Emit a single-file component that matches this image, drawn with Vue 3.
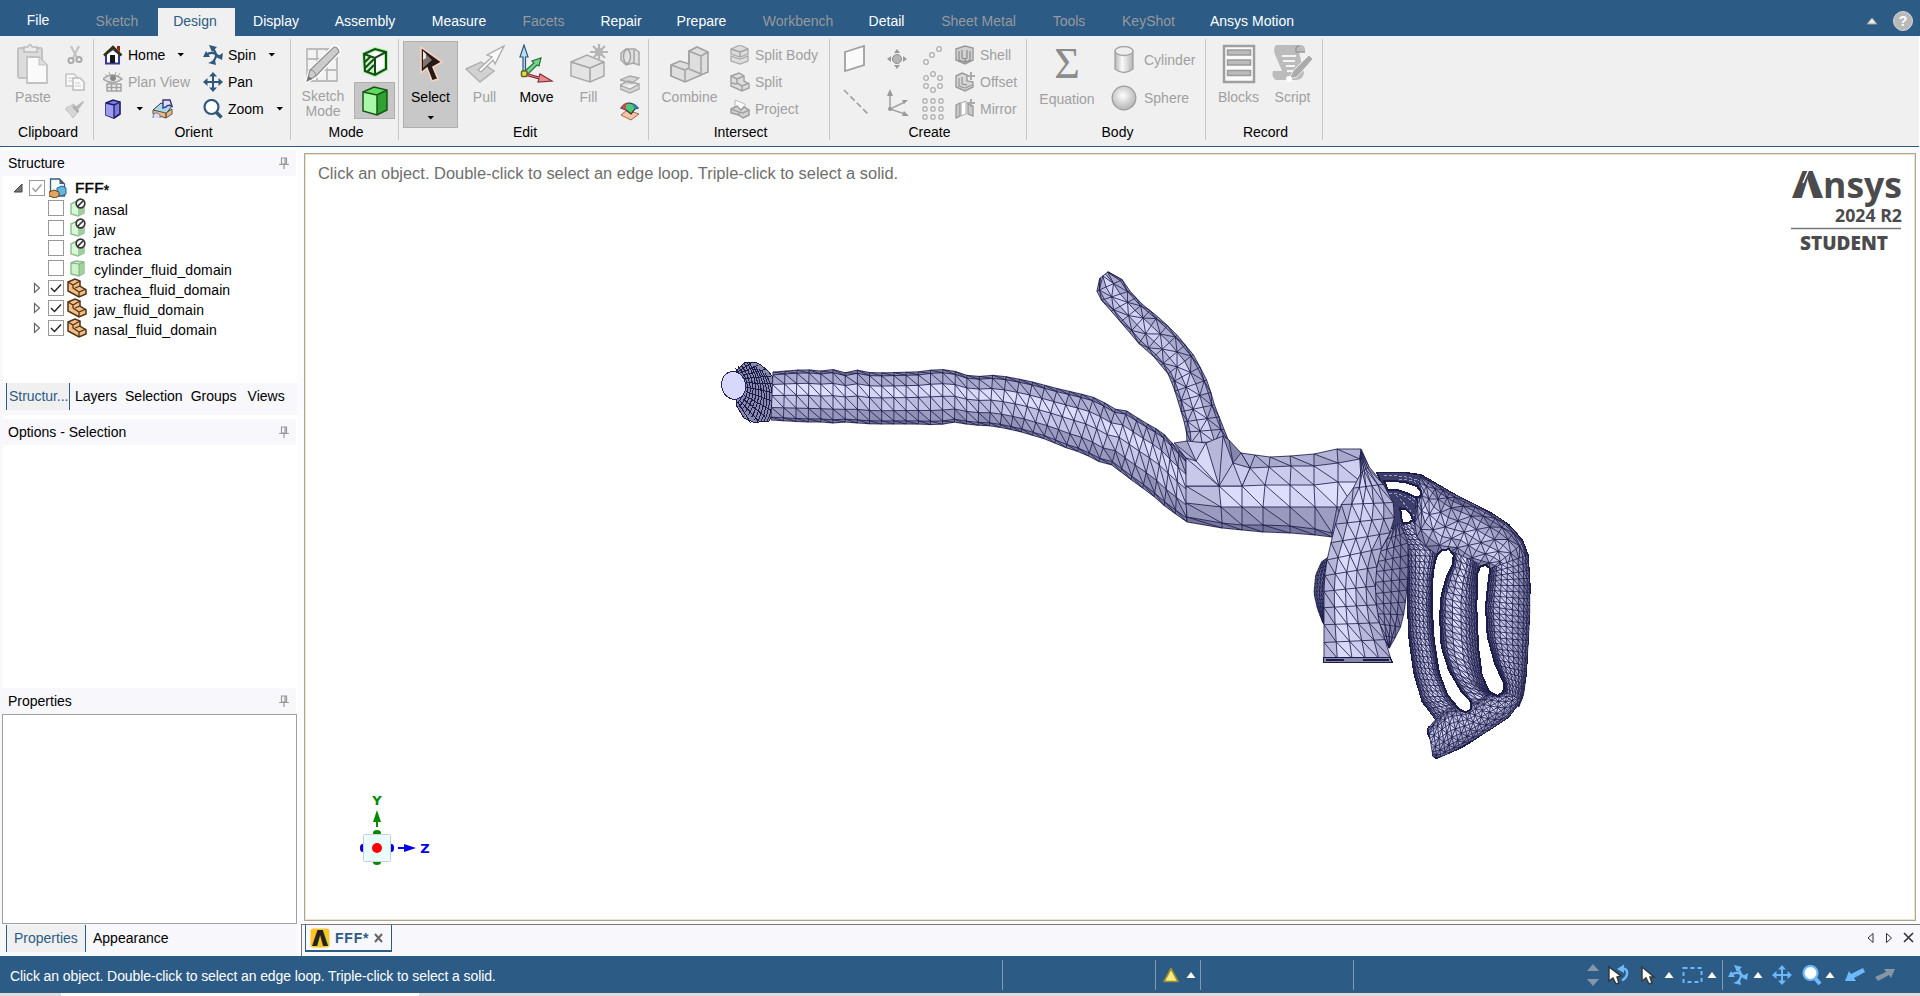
<script setup>
import { h } from 'vue'

/* ---------- icon set ---------- */
const G = 'fill="none" stroke="#a3a3a3" stroke-width="1.5" stroke-linejoin="round"'
const spin = (c) => `<g fill="none" stroke="${c}" stroke-width="2.2"><path d="M9 3q8 7 0 14.500M3 10q7-5 13 2"/></g><path fill="${c}" d="M6 0l8 2-5 5zM5 18l7-3 1 5zM0 12l3-6 4 6zM20 8l-1 7-6-3z"/>`
const pan = (c) => `<path fill="none" stroke="${c}" stroke-width="2" d="M10 3v14M3 10h14"/><path fill="${c}" d="M10 0l4 4.500H6zM10 20l4-4.500H6zM0 10l4.500-4v8zM20 10l-4.500-4v8z"/>`
const ring = (x, y) => `<circle cx="${x}" cy="${y}" r="2.300"/>`
const icons = {
  paste: [32, 41, `<rect x="1" y="5" width="24" height="30" rx="2" fill="#dcdcdc" stroke="#c2c2c2" stroke-width="2"/><path d="M7 9V4h4q2-5 4 0h5v5z" fill="#eee" stroke="#bbb" stroke-width="1.500"/><path d="M10 14h12l8 8v18H10z" fill="#fafafa" stroke="#c2c2c2" stroke-width="1.800"/><path d="M22 14v8h8z" fill="#ddd" stroke="#c2c2c2"/>`],
  cut: [20, 20, `<path d="M6 1l6 12M14 1L8 13" stroke="#c3c3c3" stroke-width="2.200" fill="none"/><g fill="#eee" stroke="#aaa" stroke-width="2"><circle cx="6" cy="15.500" r="2.600"/><circle cx="14" cy="14.500" r="2.600"/></g>`],
  copy: [20, 18, `<path d="M1 1h8l3 3v9H1z" fill="#fafafa" stroke="#c5c5c5" stroke-width="1.500"/><path d="M8 5h7l4 4v8H8z" fill="#fafafa" stroke="#bcbcbc" stroke-width="1.500"/><path d="M3 5h5M3 8h4M10 10h5M10 13h6" stroke="#ccc"/>`],
  brush: [20, 18, `<path d="M1 8l8-4 5 7-6 7q-3-5-7-8z" fill="#d6d6d6" stroke="#c3c3c3"/><path d="M10 7l8-6 1 1-6 8z" fill="#b9b9b9"/><path d="M8 6l5 6" stroke="#aaa" stroke-width="2"/>`],
  home: [20, 20, `<path d="M3 9v9.500h13V9L10 4z" fill="#fff" stroke="#38389a" stroke-width="2"/><path d="M14 1h3v6l-3-3z" fill="#991d1d"/><path d="M1 10.500L10 2l8.500 8.500" fill="none" stroke="#33330a" stroke-width="2.500"/><path d="M7 10h5v8H7z" fill="#181818"/>`],
  plan: [20, 20, `<path d="M0 7q9-8 19 0-9 7-19 0z" fill="#e5e5e5" stroke="#a5a5a5" stroke-width="1.500"/><circle cx="10" cy="6" r="3" fill="#888"/><path d="M2 2l2 2M6 0l1 3M13 0l-1 3M17 1l-2 3" stroke="#aaa"/><path d="M4 12h14v7H4zM4 15.500h14M8.500 12v7M13.500 12v7" ${G}/>`],
  cubeBlue: [18, 20, `<path d="M2 4l7-3 7 2v12l-6 4-8-3z" fill="#7b7be0" stroke="#1d1d62" stroke-width="1.600"/><path d="M2 4l8 2v13l-8-3z" fill="#9c9cf4"/><path d="M2 4l8 2 6-3M10 6v13" fill="none" stroke="#1d1d62" stroke-width="1.300"/>`],
  sheet: [22, 20, `<path d="M1 11l8-7 11 3-6 8z" fill="#a9d8ec" stroke="#333"/><path d="M1 11l13 3v5L1 15zM14 14l6-4v5l-6 4z" fill="#f0b880" stroke="#555"/><path d="M11 9V1h7l2 6q-4-2-6 1z" fill="#ddddfa" stroke="#37377f" stroke-width="1.400"/><path d="M1 19q0-6 4-5t3 5" stroke="#67a" fill="#dde"/>`],
  spin: [20, 20, spin('#2f587c')], pan: [20, 20, pan('#2f587c')],
  spinL: [20, 20, spin('#6db8fb')], panL: [20, 20, pan('#6db8fb')],
  zoom: [20, 20, `<circle cx="8.500" cy="8" r="7" fill="#fff" stroke="#2f587c" stroke-width="2.200"/><path d="M13 13l5.500 5.500" stroke="#2f587c" stroke-width="3.500"/>`],
  zoomL: [20, 20, `<circle cx="8.500" cy="8" r="7" fill="#fff" stroke="#6db8fb" stroke-width="2.200"/><path d="M13 13l5 6" stroke="#6db8fb" stroke-width="4"/>`],
  sketch: [36, 38, `<path d="M2 4h30v32H2zM2 14h30M2 25h30M12 4v32M22 4v32" fill="#f3f3f3" stroke="#bcbcbc" stroke-width="1.800"/><path d="M1 37l4-12L29 1q5 0 6 6L12 31z" fill="#c9c9c9" stroke="#fff" stroke-width="3"/><path d="M2 36l3-11L29 2q4 0 5 5L11 31z" fill="#ccc" stroke="#8f8f8f" stroke-width="1.200"/><path d="M5 25q5 0 6 6" fill="none" stroke="#888"/><path d="M2 36l1.500-5 4 3z" fill="#777"/>`],
  cubeHatch: [26, 30, `<path d="M2 7l11-5 11 3v17l-11 6-10-4z" fill="#fff" stroke="#a5efa5" stroke-width="4"/><path d="M3 8l9 3v15l-9-3z" fill="#c5f3c5"/><path d="M3 15l6-6M3 21l9-9M5 25l7-7" stroke="#174c17" stroke-width="2"/><path d="M2 7l11-5 11 3v17l-11 6-10-4zM2 7l11 4 11-6M13 11v17" fill="none" stroke="#174c17" stroke-width="2"/>`],
  cubeGreen: [26, 30, `<path d="M1 6l11-5 13 3v20l-10 5-14-4z" fill="#2fa12f"/><path d="M1 6l14 3v20L1 25z" fill="#a9f8a9"/><path d="M1 6l11-5 13 3-10 5z" fill="#5cdb5c"/><path d="M1 6l11-5 13 3v20l-10 5-14-4zM1 6l14 3 10-5M15 9v20" fill="none" stroke="#175517" stroke-width="1.500"/>`],
  arrow: [24, 38, `<path d="M2 2v26l6-5 5 13 6-2-5-12 9-5z" fill="#271a16" stroke="#f7d3bd" stroke-width="1.600"/><path d="M4 6v17l9-8z" fill="#7e7472"/><path d="M4 6v9l3-2V9z" fill="#f0e8e5"/>`],
  pull: [40, 38, `<path d="M1 24l15-7 13 9-14 11z" fill="#d2d2d2" stroke="#b1b1b1" stroke-width="1.500"/><path d="M13 25L27 12l-5-2L39 1l-9 18-2-4-12 12z" fill="#fafafa" stroke="#aaa" stroke-width="1.300"/>`],
  move: [36, 40, `<path d="M4 29V13H1L5 1l4 12H6.500v16z" fill="#b9dff2" stroke="#31587c" stroke-width="1.200"/><path d="M6 27l9-8-2-2 9-3-2 8-2-1-9 9z" fill="#75d88c" stroke="#237035" stroke-width="1.200"/><path d="M6 29l14 4 1-3 12 7-14 1 1-3-14-4z" fill="#ed8b8b" stroke="#862f3c" stroke-width="1.200"/><rect x="2.500" y="27" width="5.500" height="5.500" rx="1" fill="#e5dc4c" stroke="#67621f" stroke-width="1.500"/>`],
  fill: [38, 40, `<path d="M1 18l16-7 17 7v14l-14 6-19-6z" fill="#e3e3e3" stroke="#aaa" stroke-width="1.500"/><path d="M1 18l19 6 14-6M20 24v14" ${G}/><path d="M29 0v17M20 8h18M23 2l12 12M35 2L23 14" stroke="#b5b5b5" stroke-width="2.200"/><circle cx="29" cy="8" r="4" fill="#b5b5b5"/>`],
  s1: [20, 20, `<path d="M6 2h9l4 3v13l-6-2-7 2-5-5V6z" fill="#e1e1e1" stroke="#a6a6a6" stroke-width="1.500"/><ellipse cx="7" cy="9.500" rx="3.500" ry="7" ${G}/><path d="M14 3v13" ${G}/>`],
  s2: [20, 20, `<path d="M0 6l10-4 9 2-7 5zM0 11l8-4 11 3-9 5zM0 11v4l10 4 9-4v-5" fill="#d5d5d5" stroke="#a8a8a8" stroke-width="1.300"/>`],
  s3: [20, 20, `<path d="M1 14l6-5 12 4-8 6z" fill="#f4c5a4" stroke="#a66747"/><path d="M1 7q7-10 17 0l-3 1-4 5-5-4z" fill="#4fc77b" stroke="#292929" stroke-width="1.200"/><path d="M1 7q3-5 7-5-3 2-2 7z" fill="#d4444e"/><path d="M12 2q5 1 6 5l-3 1z" fill="#3377bd"/>`],
  combine: [40, 38, `<path d="M1 20l9-4 9 3V6l8-4 11 5v20l-23 10L1 31z" fill="#dedede" stroke="#a0a0a0" stroke-width="1.600"/><path d="M1 20l14 5 4-2V6l12 5 7-4M31 11v18l-12-5M15 25v12M1 20v11" ${G}/>`],
  splitBody: [20, 20, `<path d="M1 4l9-4 8 4v5l-8 3-9-3zM1 11l9 3 8-3v5l-8 3-9-3z" fill="#dcdcdc" stroke="#aaa" stroke-width="1.300"/><path d="M1 4l9 3 8-3M10 7v5" ${G}/>`],
  split: [20, 20, `<path d="M1 4l8-3 5 3v5l5 3v4l-7 3-11-5z" fill="#ddd" stroke="#a0a0a0" stroke-width="1.400"/><path d="M1 4l6 3 7-3M7 7v4l5 3 7-3M12 14v5M1 11l6 1" ${G}/>`],
  project: [20, 20, `<path d="M5 8V1l10 4v7" fill="#fafafa" stroke="#bbb"/><path d="M1 10l6-3 4 4 3-3 5 3v5l-6 3-4-3-8-2z" fill="#d3d3d3" stroke="#999" stroke-width="1.400"/><path d="M1 10l8 3 4 1 6-3M9 13v4" ${G}/>`],
  plane: [24, 28, `<path d="M2 7l19-6v19L2 26z" fill="#fafafa" stroke="#a0a0a0" stroke-width="1.800"/>`],
  origin: [22, 22, `<circle cx="11" cy="11" r="4.500" fill="#b5b5b5" stroke="#8e8e8e"/><path fill="#999" d="M11 1l3 4H8zM11 21l3-4H8zM1 11l4-3v6zM21 11l-4-3v6z"/>`],
  line: [26, 26, `<path d="M1 1l24 24" stroke="#a0a0a0" stroke-width="1.700" stroke-dasharray="6 3"/>`],
  axes: [24, 28, `<path d="M4 20V4M4 20l15-7M4 20l15 5" stroke="#a5a5a5" stroke-width="1.600"/><circle cx="4" cy="20" r="2" fill="#999"/><path fill="#999" d="M4 0l3 7H1zM22 11l-6 0 2 4zM23 27l-7 0 2-5z"/>`],
  p1: [22, 22, `<g fill="#f5f5f5" stroke="#adadad" stroke-width="1.300">${ring(4, 18)}${ring(10, 11)}${ring(17, 5)}</g>`],
  p2: [22, 22, `<g fill="#f5f5f5" stroke="#adadad" stroke-width="1.300">${ring(11, 3)}${ring(11, 19)}${ring(4, 7)}${ring(18, 7)}${ring(4, 15)}${ring(18, 15)}</g>`],
  p3: [22, 22, `<g fill="#f5f5f5" stroke="#adadad" stroke-width="1.300">${[3, 11, 19].map((y) => [3, 11, 19].map((x) => `<rect x="${x - 2}" y="${y - 2}" width="4" height="4" rx="1"/>`).join('')).join('')}</g>`],
  shell: [20, 20, `<path d="M1 4l9-3 8 2v12l-8 4-9-4z" fill="#d3d3d3" stroke="#989898" stroke-width="1.400"/><path d="M4 6v9l6 2 5-2V6M7 5v8l3 1 2-1V5M10 14v4" fill="none" stroke="#8f8f8f" stroke-width="1.300"/>`],
  offset: [20, 20, `<path d="M1 4l6-3 5 2v6l6 1v5l-8 4-9-4z" fill="#d8d8d8" stroke="#999" stroke-width="1.400"/><path d="M4 6v8l6 2 7-3M7 5v7l5 1" fill="none" stroke="#999" stroke-width="1.300"/><path d="M16 0v8M12 4h8" stroke="#aaa" stroke-width="2"/>`],
  mirror: [20, 20, `<path d="M1 6l4-2v13l-4 2zM13 5l5 2v10l-5-2z" fill="#c8c8c8" stroke="#999" stroke-width="1.300"/><path d="M6 4l5-2v13l-5 2z" fill="#fff" stroke="#aaa"/><path d="M16 0v8M12 4h8" stroke="#aaa" stroke-width="2"/>`],
  cylinder: [20, 28, `<path d="M1 5v18q9 7 18 0V5z" fill="url(#cyl)" stroke="#a3a3a3" stroke-width="1.300"/><ellipse cx="10" cy="5" rx="9" ry="4.500" fill="#eee" stroke="#a3a3a3" stroke-width="1.300"/>`],
  sphere: [26, 26, `<circle cx="13" cy="13" r="11.800" fill="url(#sph)" stroke="#9d9d9d" stroke-width="1.300"/>`],
  blocks: [34, 40, `<rect x="2" y="2" width="30" height="36" fill="#fafafa" stroke="#9f9f9f" stroke-width="2.500"/><path d="M5.500 6h23v5h-23zM5.500 16h23v5h-23zM5.500 26.500h23v5h-23z" fill="#bbb" stroke="#9a9a9a" stroke-width="1.500"/>`],
  script: [42, 42, `<path d="M4 2h24q6 0 5 7h-6l5 21q-1 7-8 7H4q-5-3-3-9h9L4 14Q0 6 4 2z" fill="#bcbcbc"/><path d="M27 3q-4 0-3 6h9" fill="none" stroke="#999" stroke-width="1.500"/><path d="M10 13h14M11 18h12M14 23h9M15 28h6" stroke="#f4f4f4" stroke-width="2.200"/><path d="M17 36l4-8L37 12l4 4-16 18z" fill="#ababab" stroke="#eee" stroke-width="1"/><circle cx="17" cy="36" r="3" fill="#fff"/>`],
  pin: [10, 12, `<path d="M2.500 1h5v6h-5zM0 7.500h10M5 8v4M6 1v6" fill="none" stroke="#999" stroke-width="1.200"/>`],
  doc: [18, 20, `<path d="M1.500 1h9l5 5v12h-14z" fill="#f4f8fb" stroke="#3e5b78" stroke-width="1.300"/><path d="M10.500 1v5h5z" fill="#3e5b78"/><path d="M8 10l5-2 4 2v6l-5 2-4-2z" fill="#61b7e0" stroke="#28648c"/><path d="M0 14l5-2 5 2v4l-4 2-6-2z" fill="#e4a35f" stroke="#68411e"/>`],
  cubeOff: [18, 20, `<path d="M2 6l6-3 7 2v10l-6 3-7-2z" fill="#daf7da" stroke="#8fbd8f" stroke-width="1.400"/><path d="M9 8l6-3v10l-6 3z" fill="#9fce9f"/><circle cx="11.500" cy="5.500" r="4.300" fill="#fff" stroke="#333" stroke-width="1.700"/><path d="M8.500 8.500l6-6" stroke="#333" stroke-width="1.700"/>`],
  cubePale: [18, 20, `<path d="M2 5l5-2 8 1v11l-5 3-8-2z" fill="#ccf3cc" stroke="#8fb98f" stroke-width="1.400"/><path d="M10 6l5-2v11l-5 3z" fill="#9ed39e"/><path d="M2 5l8 1 5-2M10 6v12" fill="none" stroke="#7eae7e"/>`],
  part: [20, 20, `<path d="M1 4l7-3 5 2v5l6 4v4l-7 3L1 13z" fill="#f3bd86" stroke="#4f3317" stroke-width="1.500"/><path d="M1 4l5 3 7-4M6 7v3l6 4 7-3M12 14v5M8 10l5-2" fill="none" stroke="#4f3317" stroke-width="1.300"/>`],
  updown: [14, 24, `<path d="M7 1l6 7H1zM7 23l6-7H1z" fill="#8496a8"/>`],
  curUndo: [22, 22, `<path d="M12 4.500q8-1 7 6-1 4-5 6" fill="none" stroke="#6db8fb" stroke-width="2.400"/><path d="M9 5l7-4.500v8.500z" fill="#6db8fb"/><path d="M1 3v14l4-3 3 6 3-1-2-6 4-1z" fill="#fff" stroke="#333" stroke-width="1.400"/>`],
  cur: [16, 20, `<path d="M2 2v14l4-3 3 6 3-1-2-6h4z" fill="#fff" stroke="#3a3a3a" stroke-width="1.500"/>`],
  box: [22, 18, `<rect x="1.500" y="2" width="18" height="14" fill="none" stroke="#6db8fb" stroke-width="2" stroke-dasharray="4 3"/>`],
  tri: [10, 8, `<path d="M5 1l4.500 6h-9z" fill="#fff"/>`],
  warn: [18, 18, `<path d="M9 2.500L16 15.500H2z" fill="#f8ec80" stroke="#9c8c2c" stroke-width="1.600" stroke-linejoin="round"/>`],
  back: [20, 16, `<path d="M0 14L4 4l2 3 12-6 2 4L9 11l2 3z" fill="#6db8fb"/>`],
  fwd: [20, 16, `<path d="M20 2l-4 9-2-3L3 14l-3-4 11-5-2-3z" fill="#8496a8"/>`],
  down: [8, 5, `<path d="M0.500 1h6.500L3.750 4.500z" fill="#000"/>`],
}
const Icon = ({ n }) => {
  const [w, hh, body] = icons[n]
  return h('svg', { width: w, height: hh, viewBox: `0 0 ${w} ${hh}`, innerHTML: body })
}
Icon.props = ['n']

const tabs = [
  ['File', 76, 'file'], ['Sketch', 82, 'off'], ['Design', 77, 'active'], ['Display', 82], ['Assembly', 96], ['Measure', 92],
  ['Facets', 77, 'off'], ['Repair', 78], ['Prepare', 83], ['Workbench', 110, 'off'], ['Detail', 67], ['Sheet Metal', 117, 'off'],
  ['Tools', 64, 'off'], ['KeyShot', 95, 'off'], ['Ansys Motion', 112],
]
const tree = [
  ['nasal', 'cubeOff', false], ['jaw', 'cubeOff', false], ['trachea', 'cubeOff', false], ['cylinder_fluid_domain', 'cubePale', false],
  ['trachea_fluid_domain', 'part', true], ['jaw_fluid_domain', 'part', true], ['nasal_fluid_domain', 'part', true],
]

/* ---------- surface mesh ---------- */
let seed = 7
const rnd = () => ((seed = (seed * 16807) % 2147483647) / 2147483647)
const mix = (a, b, t) => a + (b - a) * t
const lerp = (p, q, t) => [mix(p[0], q[0], t), mix(p[1], q[1], t)]
const colour = (l) => {
  const k = Math.max(0, Math.min(1, l))
  return `rgb(${Math.round(mix(100, 222, k))},${Math.round(mix(100, 222, k))},${Math.round(mix(140, 255, k))})`
}
const pt = (p) => `${p[0].toFixed(1)},${p[1].toFixed(1)}`
const T = (pts, l) => ({ v: pts, p: pts.map(pt).join(' '), f: colour(l) })
function patch(pairs, n, vs, { peak = 0.4, lo = 0.25, hi = 0.95, jit = 0.07, alt = false, pow = 1.5 } = {}) {
  const mids = pairs.map((p) => lerp(p[0], p[1], 0.5))
  const acc = [0]
  for (let i = 1; i < mids.length; i++) acc.push(acc[i - 1] + Math.hypot(mids[i][0] - mids[i - 1][0], mids[i][1] - mids[i - 1][1]))
  const at = (u) => {
    const d = u * acc[acc.length - 1]
    let i = 1
    while (i < acc.length - 1 && acc[i] < d) i++
    const t = (d - acc[i - 1]) / (acc[i] - acc[i - 1])
    return [lerp(pairs[i - 1][0], pairs[i][0], t), lerp(pairs[i - 1][1], pairs[i][1], t)]
  }
  const grid = []
  for (let i = 0; i <= n; i++) {
    const [a, b] = at(i / n)
    grid.push(vs.map((v) => lerp(a, b, v)))
  }
  const out = []
  for (let i = 0; i < n; i++)
    for (let j = 0; j < vs.length - 1; j++) {
      const v = (vs[j] + vs[j + 1]) / 2
      const d = v < peak ? (peak - v) / peak : (v - peak) / (1 - peak)
      const l = mix(hi, lo, Math.pow(d, pow))
      const [a, b, c, e] = [grid[i][j], grid[i + 1][j], grid[i + 1][j + 1], grid[i][j + 1]]
      const flip = alt && (i + j) % 2
      out.push(T(flip ? [a, b, e] : [a, b, c], l + (rnd() - 0.5) * jit * 2), T(flip ? [b, c, e] : [a, c, e], l + (rnd() - 0.5) * jit * 2))
    }
  return out
}
/* faces plus one wireframe path holding every shared edge once */
function surface(tris) {
  const seen = new Set()
  let d = ''
  for (const t of tris)
    for (let i = 0; i < 3; i++) {
      const [a, b] = [pt(t.v[i]), pt(t.v[(i + 1) % 3])].sort()
      if (a === b || seen.has(a + b)) continue
      seen.add(a + b)
      d += `M${a}L${b}`
    }
  return { tris, d }
}
const shift = (ox, oy) => (rows) => rows.map(([a, b, c, d]) => [[ox + a / 3, oy + b / 3], [ox + c / 3, oy + d / 3]])
const B = shift(1070, 250)
const N = shift(1290, 440)
const abs = (rows) => rows.map(([a, b, c, d]) => [[a, b], [c, d]])
const even = (n) => Array.from({ length: n + 1 }, (_, i) => i / n)

const trachea = patch(abs([
  [774, 372, 772, 420], [806, 369.500, 805, 422], [822, 371, 822, 422], [834, 369.500, 834, 423], [845, 373, 845, 422], [858, 370, 858, 423], [873, 373, 873, 424],
  [918, 372, 918, 424], [940, 369, 940, 425], [955, 371, 954, 422], [973, 377, 973, 425], [998, 375, 994, 426], [1030, 381, 1019, 431],
  [1060, 389, 1046, 439], [1086, 395, 1070, 449], [1100, 399, 1084, 453], [1115, 409, 1098, 461], [1128, 411, 1113, 465], [1145, 422, 1127, 476],
  [1163, 432, 1152, 494], [1175, 445, 1168, 508], [1187, 458, 1188, 522]]), 36, [0, 0.060, 0.26, 0.49, 0.74, 0.94, 1], { peak: 0.38, lo: 0.12, hi: 0.95 })
const branch = patch(B([
  [92, 85, 118, 65], [78, 112, 150, 75], [97, 150, 182, 122], [150, 210, 216, 160], [215, 287, 270, 203], [250, 315, 320, 250],
  [300, 375, 376, 318], [320, 430, 418, 400], [338, 490, 438, 470], [352, 540, 462, 530], [354, 578, 480, 575]]), 17, [0, 0.100, 0.36, 0.66, 0.92, 1], { peak: 0.42, lo: 0.25, hi: 0.9, alt: true })
const V = { a: [1175, 443], b: [1188, 441], c: [1207, 443], d: [1224, 436], e: [1197, 461], f: [1187, 458], g: [1220, 486], h: [1234, 463], i: [1242, 453], j: [1251, 468], k: [1243, 486], l: [1187, 486], q: [1230, 440] }
const joint = [
  T([V.a, V.b, V.e], 0.55), T([V.a, V.f, V.e], 0.7), T([V.b, V.c, V.e], 0.8), T([V.c, V.e, V.g], 0.95), T([V.e, V.f, V.g], 0.9), T([V.f, V.l, V.g], 0.82),
  T([V.c, V.d, V.g], 0.68), T([V.d, V.h, V.g], 0.7), T([V.d, V.h, V.q], 0.35), T([V.q, V.h, V.i], 0.28), T([V.h, V.i, V.j], 0.55), T([V.h, V.k, V.g], 0.78), T([V.h, V.j, V.k], 0.85),
]
const rows = [
  [[1242, 453], [1256, 455], [1271, 457], [1291, 456], [1315, 454], [1338, 449], [1362, 449]],
  [[1235, 463], [1251, 468], [1270, 467], [1292, 466], [1315, 466], [1339, 463], [1361, 459]],
  [[1220, 486], [1243, 486], [1266, 485], [1291, 485], [1315, 485], [1339, 482], [1362, 482]],
  [[1222, 507], [1243, 507], [1264, 507], [1291, 507], [1316, 507], [1338, 507], [1355, 507]],
  [[1223, 523], [1243, 525], [1264, 525], [1291, 526], [1316, 529], [1333, 533], [1350, 534]],
  [[1223, 528], [1243, 530], [1264, 532], [1291, 533], [1316, 535], [1333, 537], [1350, 538]],
]
const body = [T([V.l, V.g, [1222, 507]], 0.72), T([V.l, [1187, 503], [1222, 507]], 0.66), T([[1187, 503], [1222, 507], [1223, 523]], 0.45), T([[1187, 503], [1188, 517], [1223, 523]], 0.42), T([[1188, 517], [1223, 523], [1223, 528]], 0.15), T([[1188, 517], [1188, 522], [1223, 528]], 0.12)]
const shade = [0.6, 0.84, 0.96, 0.42, 0.15]
rows.slice(0, 5).forEach((r, j) => {
  for (let i = 0; i < 6; i++) {
    body.push(T([r[i], r[i + 1], rows[j + 1][i + 1]], shade[j] + rnd() * 0.06), T([r[i], rows[j + 1][i + 1], rows[j + 1][i]], shade[j] - rnd() * 0.05))
  }
})
const throatSurfaces = [
  patch(N([[315, 260, 335, 250], [272, 335, 357, 310], [258, 410, 357, 400], [260, 480, 352, 470], [268, 540, 340, 550], [285, 595, 315, 600], [300, 625, 302, 622]]), 11, even(4), { peak: 0.1, lo: 0.1, hi: 0.42, jit: 0.05 }),
  patch(N([[98, 365, 120, 350], [80, 405, 112, 400], [75, 460, 106, 460], [85, 505, 106, 510], [102, 550, 106, 550]]), 16, even(4), { lo: 0, hi: 0.3 }),
  patch(N([[213, 50, 217, 28], [215, 100, 240, 80], [215, 135, 270, 105], [175, 152, 293, 155], [150, 210, 320, 200], [130, 290, 312, 262], [112, 370, 272, 335], [105, 430, 258, 410], [105, 490, 260, 480], [105, 545, 268, 540], [105, 600, 285, 590], [105, 655, 305, 655]]), 12, [0, 0.200, 0.42, 0.62, 0.82, 1], { peak: 0.35, lo: 0.5, hi: 0.93 }),
].map(surface)
const tube = { peak: 0.5, lo: 0.08, hi: 1, jit: 0.12, pow: 1.3 }
const nasalSurfaces = [
  patch(N([[325, 262, 385, 240], [332, 290, 415, 290], [352, 330, 445, 335], [357, 400, 431, 410], [357, 480, 428, 500], [361, 580, 433, 590], [375, 690, 450, 700], [397, 775, 482, 772], [440, 840, 520, 815]]), 34, [0, 0.060, 0.16, 0.3, 0.45, 0.62, 0.78, 0.87, 0.94, 1], { ...tube, peak: 0.55 }),
  patch(N([[395, 105, 385, 165], [440, 130, 375, 235], [470, 148, 385, 300], [500, 165, 445, 345], [560, 195, 495, 345], [620, 228, 535, 375], [660, 255, 575, 385], [700, 300, 603, 385], [716, 350, 605, 405]]), 13, [0, 0.040, 0.11, 0.22, 0.38, 0.54, 0.7, 0.85, 1], { peak: 0.62, lo: 0.1, hi: 0.82, jit: 0.14, alt: true }),
  patch(N([[490, 335, 568, 370], [495, 365, 564, 395], [475, 410, 560, 430], [457, 470, 562, 500], [455, 560, 565, 600], [462, 630, 572, 680], [485, 700, 590, 745], [515, 750, 620, 770], [548, 800, 640, 785]]), 24, [0, 0.050, 0.12, 0.32, 0.56, 0.7, 0.79, 0.86, 0.93, 1], { ...tube, peak: 0.38 }),
  patch(N([[605, 385, 716, 345], [600, 430, 722, 430], [592, 500, 722, 520], [598, 590, 718, 600], [620, 670, 712, 690], [647, 735, 705, 760], [640, 780, 690, 800]]), 24, [0, 0.050, 0.1, 0.16, 0.3, 0.45, 0.6, 0.74, 0.86, 0.94, 1], { ...tube, peak: 0.36, hi: 0.85 }),
  patch(N([[418, 865, 432, 950], [440, 838, 450, 953], [475, 805, 500, 930], [530, 805, 560, 895], [550, 790, 600, 870], [600, 765, 660, 830], [645, 755, 697, 780]]), 20, [0, 0.080, 0.2, 0.36, 0.52, 0.68, 0.82, 0.93, 1], { peak: 0.35, lo: 0.2, hi: 0.88, jit: 0.14, alt: true }),
].map(surface)
const path = (pts) => 'M' + pts.map(([x, y]) => pt([1290 + x / 3, 440 + y / 3])).join('L') + 'Z'
const nasalShell = path([[262, 97], [345, 97], [397, 105], [500, 165], [600, 215], [660, 255], [700, 300], [717, 345], [723, 440], [719, 560], [712, 700], [700, 775], [660, 830], [600, 870], [520, 922], [442, 955], [432, 945], [433, 915], [416, 880], [418, 862], [442, 855], [440, 838], [400, 785], [375, 700], [361, 600], [355, 480], [355, 340], [325, 285], [305, 260], [290, 150]])
const holes = [
  [[286, 123], [345, 125], [383, 138], [397, 155], [393, 170], [380, 173], [355, 160], [325, 150], [296, 150]],
  [[334, 205], [350, 208], [366, 222], [371, 240], [358, 250], [342, 250], [337, 235]],
  [[430, 420], [434, 380], [444, 345], [460, 330], [480, 328], [494, 345], [492, 372], [472, 415], [458, 465], [453, 530], [458, 620], [480, 690], [518, 755], [546, 785], [546, 808], [530, 817], [510, 808], [475, 765], [450, 700], [434, 600], [428, 500]],
  [[565, 400], [573, 380], [590, 374], [604, 386], [598, 430], [591, 500], [596, 590], [618, 670], [645, 730], [643, 757], [625, 768], [600, 755], [578, 705], [567, 620], [562, 500]],
].map(path)
const ribs = Array.from({ length: 11 }, (_, i) => {
  const t = i / 10
  const x = mix(741, 768, t)
  const top = t < 0.4 ? mix(368, 362, t / 0.4) : mix(362, 373, (t - 0.4) / 0.6)
  return `M${x - 5 + t * 3} ${top} Q${x + 14 - t * 2} ${mix(388, 395, t)} ${x - 4 + t * 4} ${mix(404, 422, Math.min(1, t * 1.500))}`
})
const spokes = Array.from({ length: 11 }, (_, i) => {
  const a = mix(-1.500, 1.500, i / 10)
  return `M${(738 + 9 * Math.cos(a)).toFixed(1)} ${(387 + 15 * Math.sin(a)).toFixed(1)} L${(750 + 26 * Math.cos(a)).toFixed(1)} ${(393 + 30 * Math.sin(a)).toFixed(1)}`
})
const surfaces = [trachea, branch, body, joint].map(surface)
</script>

<template>
  <div class="app">
    <svg class="defs" width="0" height="0">
      <defs>
        <linearGradient id="cyl"><stop offset="0" stop-color="#b5b5b5" /><stop offset=".4" stop-color="#fafafa" /><stop offset="1" stop-color="#b5b5b5" /></linearGradient>
        <radialGradient id="sph" cx=".45" cy=".4" r=".6"><stop offset="0" stop-color="#fff" /><stop offset="1" stop-color="#b3b3b3" /></radialGradient>
      </defs>
    </svg>

    <nav class="tabs">
      <div v-for="t in tabs" :key="t[0]" class="tab" :class="t[2]" :style="{ width: t[1] + 'px' }">{{ t[0] }}</div>
      <div class="tabtools">
        <svg width="12" height="8"><path d="M6 1l5 6H1z" fill="#eee" stroke="#999" /></svg>
        <svg width="20" height="20"><circle cx="10" cy="10" r="9.500" fill="#b9b9b9" stroke="#d7d7d7" /><text x="10" y="15" text-anchor="middle" font-size="14" font-weight="700" fill="#fff">?</text></svg>
      </div>
    </nav>

    <div class="ribbon">
      <section class="group">
        <div class="gbody">
          <div class="big off w65"><div class="ic"><Icon n="paste" /></div>Paste</div>
          <div class="col smalls"><span><Icon n="cut" /></span><span><Icon n="copy" /></span><span><Icon n="brush" /></span></div>
        </div>
        <div class="label">Clipboard</div>
      </section>
      <section class="group g2">
        <div class="gbody">
          <div class="col c1">
            <div class="row"><Icon n="home" />Home<Icon n="down" class="dn" /></div>
            <div class="row off"><Icon n="plan" />Plan View</div>
            <div class="row cubes"><Icon n="cubeBlue" /><Icon n="down" /><Icon n="sheet" class="sh" /></div>
          </div>
          <div class="col">
            <div class="row"><Icon n="spin" />Spin<Icon n="down" class="dn" /></div>
            <div class="row"><Icon n="pan" />Pan</div>
            <div class="row"><Icon n="zoom" />Zoom<Icon n="down" class="dn" /></div>
          </div>
        </div>
        <div class="label">Orient</div>
      </section>
      <section class="group g3">
        <div class="gbody">
          <div class="big off w64 two"><div class="ic"><Icon n="sketch" /></div>Sketch<br>Mode</div>
          <div class="col modes"><span><Icon n="cubeHatch" /></span><span class="on"><Icon n="cubeGreen" /></span></div>
        </div>
        <div class="label">Mode</div>
      </section>
      <section class="group g4">
        <div class="gbody">
          <div class="big sel"><div class="ic"><Icon n="arrow" /></div>Select<Icon n="down" /></div>
          <div class="big off w54"><div class="ic"><Icon n="pull" /></div>Pull</div>
          <div class="big w51"><div class="ic"><Icon n="move" /></div>Move</div>
          <div class="big off w52"><div class="ic"><Icon n="fill" /></div>Fill</div>
          <div class="col rows"><div class="row"><Icon n="s1" /></div><div class="row"><Icon n="s2" /></div><div class="row"><Icon n="s3" /></div></div>
        </div>
        <div class="label">Edit</div>
      </section>
      <section class="group g5">
        <div class="gbody">
          <div class="big off w82"><div class="ic"><Icon n="combine" /></div>Combine</div>
          <div class="col off">
            <div class="row"><Icon n="splitBody" />Split Body</div>
            <div class="row"><Icon n="split" />Split</div>
            <div class="row"><Icon n="project" />Project</div>
          </div>
        </div>
        <div class="label">Intersect</div>
      </section>
      <section class="group g6">
        <div class="gbody">
          <div class="quad"><Icon n="plane" /><Icon n="origin" /><Icon n="line" /><Icon n="axes" /></div>
          <div class="col pats"><div class="row"><Icon n="p1" /></div><div class="row"><Icon n="p2" /></div><div class="row"><Icon n="p3" /></div></div>
          <div class="col off">
            <div class="row"><Icon n="shell" />Shell</div>
            <div class="row"><Icon n="offset" />Offset</div>
            <div class="row"><Icon n="mirror" />Mirror</div>
          </div>
        </div>
        <div class="label">Create</div>
      </section>
      <section class="group g7">
        <div class="gbody">
          <div class="big off w80 eq"><div class="ic sigma">Σ</div>Equation</div>
          <div class="col off solids">
            <div><span><Icon n="cylinder" /></span>Cylinder</div>
            <div><span><Icon n="sphere" /></span>Sphere</div>
          </div>
        </div>
        <div class="label">Body</div>
      </section>
      <section class="group g8">
        <div class="gbody">
          <div class="big off w60"><div class="ic"><Icon n="blocks" /></div>Blocks</div>
          <div class="big off w50"><div class="ic"><Icon n="script" /></div>Script</div>
        </div>
        <div class="label">Record</div>
      </section>
    </div>

    <main class="main">
      <aside class="side">
        <header class="head">Structure<Icon n="pin" /></header>
        <div class="tree">
          <div class="node root">
            <svg class="exp" width="12" height="12"><path d="M9 2v8H1z" fill="#777" stroke="#444" /></svg>
            <i class="chk"><svg width="14" height="14"><path d="M2.500 7l3 3.500 6-7" fill="none" stroke="#999" stroke-width="1.300" /></svg></i>
            <Icon n="doc" /><b>FFF<em>*</em></b>
          </div>
          <div v-for="n in tree" :key="n[0]" class="node">
            <svg class="exp" width="8" height="12"><path v-if="n[2]" d="M1.500 1.500l5 4.500-5 4.500z" fill="#fff" stroke="#666" stroke-width="1.200" /></svg>
            <i class="chk"><svg v-if="n[2]" width="14" height="14"><path d="M2 7l3.500 3.500 6.500-7" fill="none" stroke="#222" stroke-width="1.400" /></svg></i>
            <Icon :n="n[1]" class="ti" /><span>{{ n[0] }}</span>
          </div>
        </div>
        <div class="ptabs stabs"><span class="cur">Structur...</span><span>Layers</span><span>Selection</span><span>Groups</span><span>Views</span></div>
        <header class="head opt">Options - Selection<Icon n="pin" /></header>
        <div class="blank"></div>
        <header class="head">Properties<Icon n="pin" /></header>
        <div class="props"></div>
        <div class="ptabs btabs"><span class="cur">Properties</span><span>Appearance</span></div>
      </aside>

      <section class="work">
        <div class="canvas">
          <svg class="scene" width="1608" height="765" viewBox="307 155 1608 765">
            <g shape-rendering="crispEdges">
              <path d="M737 371L746 362H756L762 365L770 372L778 383V407L770 421L755 422.500L745 418L737 405Z" fill="#8a8aae" stroke="#1c1c48" />
              <path v-for="(d, i) in ribs" :key="'r' + i" :d="d" fill="none" stroke="#1c1c48" />
              <path v-for="(d, i) in spokes" :key="'s' + i" :d="d" fill="none" stroke="#1c1c48" />
              <g v-for="(s, k) in surfaces" :key="k" class="mesh"><polygon v-for="(t, i) in s.tris" :key="i" :points="t.p" :fill="t.f" /><path :d="s.d" /></g>
              <ellipse cx="734.500" cy="385.500" rx="12" ry="14" transform="rotate(-12 734 385)" fill="#d8d8fd" stroke="#24245a" />
              <path :d="nasalShell" fill="#3e3e6b" stroke="#1c1c48" stroke-width="1.500" />
              <g fill="none" stroke="#9a9aca" stroke-dasharray="3 2"><path d="M1385 476Q1404 474 1424 482" /><path d="M1400 479Q1414 479 1430 489" /><path d="M1390 493Q1410 494 1419 508" /><path d="M1397 495Q1408 506 1416 517" /><path d="M1405 492Q1416 498 1420 504" /></g>
              <g v-for="(s, k) in nasalSurfaces" :key="'n' + k" class="mesh"><polygon v-for="(t, i) in s.tris" :key="i" :points="t.p" :fill="t.f" /><path :d="s.d" /></g>
              <path v-for="(d, i) in holes" :key="'h' + i" :d="d" fill="#fff" stroke="#1c1c48" stroke-width="2" />
              <g v-for="(s, k) in throatSurfaces" :key="'t' + k" class="mesh"><polygon v-for="(t, i) in s.tris" :key="i" :points="t.p" :fill="t.f" /><path :d="s.d" /></g>
              <path d="M1324.500 657.500H1391L1393.500 662.500H1324.500Z" fill="#8888ad" stroke="#1c1c48" stroke-width="1.500" /><path d="M1327 660h18M1364 660h26" stroke="#1c1c48" stroke-width="2" />
            </g>
          </svg>
          <div class="hint">Click an object. Double-click to select an edge loop. Triple-click to select a solid.</div>
          <svg class="logo" width="120" height="90" viewBox="0 0 120 90" fill="#4b4b4d">
            <text x="3" y="33" font-family="Open Sans" font-weight="800" font-size="37" textLength="31" lengthAdjust="spacingAndGlyphs">Λ</text>
            <path d="M20 4l-6 14" stroke="#fff" stroke-width="1.500" />
            <text x="34" y="33" font-family="Open Sans" font-weight="700" font-size="36" textLength="79" lengthAdjust="spacingAndGlyphs">nsys</text>
            <text x="46" y="56.500" font-family="Open Sans" font-weight="700" font-size="18" textLength="67" lengthAdjust="spacingAndGlyphs">2024 R2</text>
            <path d="M2 63.500h110" stroke="#77777a" stroke-width="1.500" />
            <text x="11" y="85" font-family="Open Sans" font-weight="800" font-size="18.500" textLength="88" lengthAdjust="spacingAndGlyphs">STUDENT</text>
          </svg>
          <svg class="triad" width="90" height="84" viewBox="0 0 90 84">
            <text x="18" y="19" text-anchor="middle" font-family="DejaVu Sans" font-weight="700" font-size="13" fill="#008a00">Y</text>
            <path d="M18 24l4 12h-3v5h-2v-5h-3z" fill="#008a00" /><ellipse cx="18" cy="47" rx="4" ry="3" fill="#008a00" /><ellipse cx="18" cy="76" rx="4" ry="3" fill="#008a00" />
            <ellipse cx="3.500" cy="62" rx="2.500" ry="4" fill="#0000e8" /><ellipse cx="32.500" cy="62" rx="2.500" ry="4" fill="#0000e8" />
            <rect x="4.500" y="48.500" width="27" height="27" rx="1" fill="#e9fdfd" stroke="#cdcddd" /><circle cx="18" cy="62" r="5" fill="#f00" />
            <path d="M39 61h6v-3l12 4-12 4v-3h-6z" fill="#0000f0" />
            <text x="66" y="67" text-anchor="middle" font-family="DejaVu Sans" font-weight="700" font-size="13" fill="#0000f0">Z</text>
          </svg>
        </div>
        <div class="docs">
          <div class="doctab">
            <svg class="mark" width="20" height="20"><rect x=".5" y=".5" width="19" height="19" rx="3" fill="#fdc627" /><text x="10" y="18" text-anchor="middle" font-family="Open Sans" font-size="23" font-weight="800" fill="#222">Λ</text></svg>
            <b>FFF*</b>
            <svg width="10" height="10"><path d="M1 1l7 8M8 1L1 9" stroke="#666" stroke-width="2" /></svg>
          </div>
          <div class="docnav">
            <svg width="8" height="12"><path d="M6 1.500v9L1 6z" fill="none" stroke="#333" /></svg>
            <svg width="8" height="12"><path d="M1.500 1.500v9L6.500 6z" fill="none" stroke="#333" /></svg>
            <svg width="11" height="11"><path d="M1 1l9 9M10 1L1 10" stroke="#333" stroke-width="1.600" /></svg>
          </div>
        </div>
      </section>
    </main>

    <footer class="status">
      <div class="msg">Click an object. Double-click to select an edge loop. Triple-click to select a solid.</div>
      <div class="cell c153"></div>
      <div class="cell c45"><Icon n="warn" /><Icon n="tri" /></div>
      <div class="cell c153"></div>
      <div class="cell tools">
        <Icon n="updown" /><Icon n="curUndo" class="m8" /><Icon n="cur" class="m10" /><Icon n="tri" class="m8" /><Icon n="box" class="m8" /><Icon n="tri" class="m2" />
      </div>
      <div class="cell tools2">
        <Icon n="spinL" /><Icon n="tri" class="m4" /><Icon n="panL" class="m9" /><Icon n="zoomL" class="m10" /><Icon n="tri" class="m2" /><Icon n="back" class="m10" /><Icon n="fwd" class="m10" />
      </div>
    </footer>
    <div class="edge"><div></div></div>
  </div>
</template>

<style>
html, body { margin: 0; overflow: hidden; background: #fff; }
</style>
<style scoped>
.app { width: 1920px; height: 996px; display: flex; flex-direction: column; overflow: hidden; font: 14px/16px "Liberation Sans", Arial, sans-serif; color: #000; background: #fff; }
.app * { box-sizing: border-box; }
.app :deep(svg) { flex: none; display: block; }
.defs { position: absolute; }
.tabs { height: 36px; flex: none; background: #2c5b85; display: flex; align-items: flex-end; color: #fff; }
.tab { height: 28px; text-align: center; line-height: 27px; white-space: nowrap; }
.tab.file { line-height: 24px; }
.tab.off { color: #98999c; }
.tab.active { background: #f0f0f0; color: #2c5b85; padding-right: 3px; }
.tabtools { margin-left: auto; height: 36px; display: flex; align-items: center; gap: 15px; padding: 6px 7px 0 0; }
.ribbon { height: 111px; flex: none; background: #f0f0f0; border-bottom: 1px solid #2c5b85; margin-right: 1px; display: flex; padding-top: 3px; }
.group { width: 94px; height: 101px; border-right: 1px solid #c6c6c6; display: flex; flex-direction: column; padding-top: 2px; }
.g2 { width: 197px; } .g3 { width: 108px; } .g4 { width: 250px; } .g5 { width: 181px; } .g6 { width: 197px; } .g7 { width: 179px; } .g8 { width: 117px; }
.gbody { height: 86px; display: flex; }
.label { text-align: center; padding-left: 3px; line-height: 16px; margin-top: -3px; }
.off { color: #a0a0a0; }
.big { display: flex; flex-direction: column; align-items: center; text-align: center; }
.ic { height: 45px; margin-bottom: 3px; display: flex; align-items: center; }
.w65 { width: 66px; } .w64 { width: 64px; } .w54 { width: 53px; } .w51 { width: 51px; } .w52 { width: 53px; } .w82 { width: 81px; } .w80 { width: 80px; } .w60 { width: 65px; } .w50 { width: 43px; }
.two { line-height: 15px; }
.col { display: flex; flex-direction: column; }
.smalls { width: 20px; margin-left: -1px; }
.smalls span { height: 27px; display: flex; align-items: center; }
.row { height: 27px; display: flex; align-items: center; gap: 5px; white-space: nowrap; }
.dn { margin-left: 7px; }
.c1 { width: 100px; }
.g2 .gbody { padding-left: 9px; }
.cubes { gap: 14px; padding-left: 1px; }
.cubes .sh { margin-left: -6px; }
.modes { width: 41px; margin-left: -1px; }
.modes span { height: 37px; display: flex; align-items: center; justify-content: center; }
.modes span:first-child { height: 41px; }
.modes .on { background: #c6c6c6; border: 1px solid #b0b0b0; }
.g4 .gbody { padding-left: 4px; }
.sel { width: 55px; height: 87px; background: #c8c8c8; border: 1px solid #b0b0b0; }
.sel .ic { height: 44px; }
.sel > svg { margin-top: 10px; }
.rows { padding: 2px 0 0 5px; }
.quad { display: grid; grid-template-columns: 43px 39px; grid-template-rows: 44px 38px; padding: 4px 0 0 13px; width: 92px; }
.quad > :nth-child(2) { margin-top: 3px; }
.pats { width: 33px; }
.sigma { font: 44px/44px "Liberation Serif", serif; color: #8c8c8c; justify-content: center; }
.eq .ic { margin-bottom: 5px; }
.solids { padding: 0 0 0 3px; }
.solids div { height: 38px; display: flex; align-items: center; gap: 7px; }
.solids span { width: 27px; display: flex; justify-content: center; }
.main { height: 809px; flex: none; display: flex; background: #fcfcfe; }
.side { width: 299px; border-left: 3px solid #f7f7fc; padding-top: 3px; display: flex; flex-direction: column; background: #fff; }
.head { height: 26px; background: #f7f7fc; display: flex; align-items: center; justify-content: space-between; padding: 0 7px 0 5px; margin-right: 1px; flex: none; }
.tree { height: 207px; padding-top: 2px; }
.node { height: 20px; display: flex; align-items: center; padding-left: 30px; letter-spacing: 0.120px; }
.node .exp { margin-right: 7px; }
.root { padding-left: 10px; }
.root .exp { margin-right: 4px; }
.chk { width: 16px; height: 16px; border: 1px solid #999; background: #fff; flex: none; display: block; margin-right: 4px; }
.node span { padding-top: 4px; }
.node :deep(svg[width="20"]) { margin: 0 7px 0 -1px; }
.node :deep(svg[width="18"]) { margin: 0 7px 0 1px; }
.root :deep(svg[width="18"]) { margin: 0 8px 0 0; }
.root b { font-weight: 400; font-size: 15.500px; -webkit-text-stroke: 0.400px #000; }
.root em { font-style: normal; font-size: 14px; position: relative; top: 2px; }
.ptabs { height: 32px; background: #f7f7fc; display: flex; line-height: 27px; padding-left: 3px; flex: none; white-space: nowrap; }
.ptabs .cur { height: 27px; border: solid #2c5b85; border-width: 0 1px; background: #f0f0f0; color: #2c5b85; }
.stabs .cur { width: 64px; padding-left: 2px; margin-right: 5px; letter-spacing: -0.050px; }
.stabs span + span { margin-right: 8px; }
.stabs span:last-child { margin-left: 3px; }
.opt { margin-top: 4px; }
.blank { height: 243px; flex: none; }
.props { height: 210px; margin-left: -1px; border: 1px solid #a0a0a0; flex: none; }
.btabs { padding-top: 1px; }
.btabs .cur { width: 80px; padding-left: 7px; margin-right: 7px; }
.work { flex: 1; margin-left: 4px; padding-top: 6px; display: flex; flex-direction: column; }
.canvas { position: relative; height: 768px; margin: 0 4px 0 3px; border: 1px solid #aba796; box-shadow: inset 0 0 0 1px #ece5cb; background: #fff; flex: none; overflow: hidden; }
.scene { margin: 1px; }
.mesh polygon { stroke: none; }
.mesh path { fill: none; stroke: #1f1f4b; stroke-width: 0.850px; shape-rendering: geometricPrecision; }
.hint { position: absolute; left: 13px; top: 9px; font-size: 16.450px; line-height: 20px; color: #6e6e6e; white-space: nowrap; }
.logo { position: absolute; left: 1484px; top: 11px; overflow: visible; }
.triad { position: absolute; left: 54px; top: 632px; }
.docs { margin-top: 3px; border-top: 1px solid #777; border-left: 1px solid #777; height: 32px; background: #f7f7fc; display: flex; justify-content: space-between; }
.doctab { width: 87px; height: 27px; margin-left: 3px; border: solid #2c5b85; border-width: 0 1px 2px; display: flex; align-items: center; padding-left: 4px; color: #2c5b85; }
.mark { overflow: visible; }
.doctab b { font-size: 14px; margin: 0 5px 0 5px; letter-spacing: 0.800px; }
.docnav { display: flex; gap: 10px; padding: 7px 6px 0 0; height: 20px; }
.status { height: 37px; flex: none; background: #2c5b85; color: #fff; display: flex; align-items: center; }
.msg { width: 1002px; padding: 2px 0 0 10px; white-space: nowrap; letter-spacing: -0.100px; }
.cell { height: 30px; border-left: 1px solid #7f9bb4; display: flex; align-items: center; }
.c153 { width: 153px; }
.c45 { width: 45px; padding-left: 6px; gap: 6px; }
.tools { width: 369px; padding-left: 232px; }
.tools2 { padding-left: 5px; }
.m2 { margin-left: 3px; } .m4 { margin-left: 5px; } .m8 { margin-left: 8px; } .m9 { margin-left: 9px; } .m10 { margin-left: 10px; }
.edge { height: 3px; background: #dedede; padding-left: 61px; }
.edge div { width: 358px; height: 3px; background: #fff; }
</style>
